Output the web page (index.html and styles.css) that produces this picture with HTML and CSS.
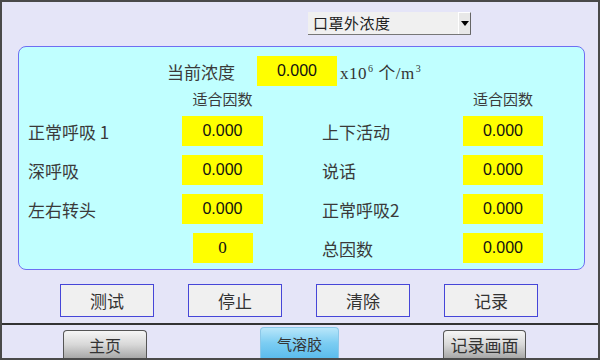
FILE: index.html
```html
<!DOCTYPE html>
<html lang="zh-CN">
<head>
  <meta charset="UTF-8" />
  <title>口罩外浓度</title>
  <link rel="stylesheet" href="styles.css">
</head>
<body>
  <div class="screen">
    <div class="top">
      <div class="select">
        <span class="select-text">口罩外浓度</span>
        <span class="select-btn"><span class="arrow"></span></span>
      </div>
    </div>

    <div class="panel">
      <div class="conc-row">
        <span class="label">当前浓度</span>
        <span class="value conc-value">0.000</span>
        <span class="unit">x10<sup>6</sup> 个/m<sup>3</sup></span>
      </div>
      <div class="grid">
        <span></span>
        <span class="col-head">适合因数</span>
        <span></span>
        <span></span>
        <span class="col-head">适合因数</span>

        <span class="label">正常呼吸 1</span>
        <span class="value">0.000</span>
        <span></span>
        <span class="label">上下活动</span>
        <span class="value">0.000</span>

        <span class="label">深呼吸</span>
        <span class="value">0.000</span>
        <span></span>
        <span class="label">说话</span>
        <span class="value">0.000</span>

        <span class="label">左右转头</span>
        <span class="value">0.000</span>
        <span></span>
        <span class="label">正常呼吸2</span>
        <span class="value">0.000</span>

        <span></span>
        <span class="value count">0</span>
        <span></span>
        <span class="label">总因数</span>
        <span class="value">0.000</span>
      </div>
    </div>

    <div class="actions">
      <button class="action">测试</button>
      <button class="action">停止</button>
      <button class="action">清除</button>
      <button class="action">记录</button>
    </div>

    <div class="nav">
      <button class="tab tab-home">主页</button>
      <button class="tab tab-active">气溶胶</button>
      <button class="tab tab-record">记录画面</button>
    </div>
  </div>
</body>
</html>
```

FILE: styles.css
```css
body {
  margin: 0;
  padding: 0;
  font-family: "Noto Sans CJK SC", sans-serif;
}
.screen {
  width: 600px;
  height: 360px;
  box-sizing: border-box;
  border: 2px solid #4a4a4a;
  background-color: #e5e5f8;
  display: flex;
  flex-direction: column;
  overflow: hidden;
}
.top {
  padding: 10px 0 0 306px;
}
.select {
  width: 163px;
  height: 23px;
  box-sizing: border-box;
  background-color: #f0f0f0;
  border-bottom: 1px solid #777;
  display: flex;
  align-items: center;
}
.select-text {
  flex: 1;
  padding-left: 5px;
  font-size: 15px;
  letter-spacing: 0.5px;
  color: #222;
  line-height: 22px;
}
.select-btn {
  width: 13px;
  height: 22px;
  box-sizing: border-box;
  border-left: 1px solid #fff;
  border-right: 1px solid #666;
  border-top: 1px solid #fff;
  background-color: #e8e8e8;
  display: flex;
  align-items: center;
  justify-content: center;
}
.arrow {
  width: 0;
  height: 0;
  border-left: 4px solid transparent;
  border-right: 4px solid transparent;
  border-top: 5px solid #000;
}
.panel {
  margin: 11px 0 0 16px;
  width: 567px;
  height: 224px;
  box-sizing: border-box;
  border: 1px solid #6e6ef2;
  border-radius: 8px;
  background-color: #c0ffff;
  padding: 9px 0 0 9px;
}
.conc-row {
  display: flex;
  align-items: center;
  height: 30px;
  padding-left: 139px;
  margin-bottom: 5px;
}
.label {
  font-size: 17px;
  color: #3a3a3a;
  white-space: nowrap;
  align-self: center;
}
.conc-value {
  margin-left: 22px;
  width: 80px;
}
.unit {
  margin-left: 3px;
  font-family: "Liberation Serif", "Noto Sans CJK SC", serif;
  font-size: 17px;
  letter-spacing: 0.5px;
  color: #333;
}
.unit sup {
  font-size: 10px;
  vertical-align: 7px;
  margin-left: 1px;
}
.grid {
  display: grid;
  grid-template-columns: 154px 81px 59px 141px 80px;
  grid-template-rows: 16px repeat(4, 30px);
  row-gap: 9px;
}
.col-head {
  justify-self: center;
  font-size: 15px;
  line-height: 16px;
  color: #3a3a3a;
  white-space: nowrap;
}
.value {
  height: 30px;
  background-color: #ffff00;
  display: flex;
  align-items: center;
  justify-content: center;
  font-family: "Liberation Sans", Arial, sans-serif;
  font-size: 16px;
  color: #111;
}
.count {
  width: 60px;
  justify-self: center;
  font-family: "Liberation Serif", serif;
  font-size: 17px;
}
.actions {
  display: flex;
  gap: 34px;
  padding-left: 58px;
  margin-top: 14px;
}
.action {
  width: 94px;
  height: 33px;
  box-sizing: border-box;
  background-color: #f0f0f0;
  border: 1px solid #4646d8;
  font-family: "Noto Sans CJK SC", sans-serif;
  font-size: 17px;
  color: #333;
  padding: 0;
}
.nav {
  margin-top: 6px;
  border-top: 2px solid #333;
  height: 33px;
  display: flex;
  align-items: flex-end;
  padding-left: 61px;
}
.tab {
  height: 28px;
  box-sizing: border-box;
  border: 1px solid #555;
  border-bottom: none;
  border-radius: 4px 4px 0 0;
  background: linear-gradient(#f6f6f6, #d8d8d8 50%, #a8a8a8);
  font-family: "Noto Sans CJK SC", sans-serif;
  font-size: 16px;
  color: #333;
  padding: 0;
}
.tab-home {
  width: 84px;
}
.tab-active {
  width: 79px;
  height: 31px;
  margin-left: 113px;
  border-color: #8cc8e8;
  background: linear-gradient(#b8e6fa, #7ccdf2 50%, #5cbcec);
  font-size: 15px;
}
.tab-record {
  width: 83px;
  margin-left: 104px;
  font-size: 17px;
}
```
